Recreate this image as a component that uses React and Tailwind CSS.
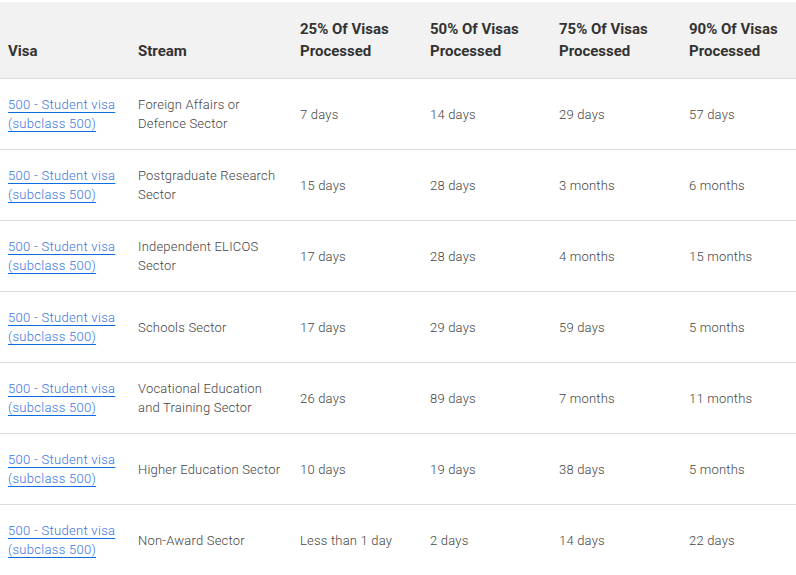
const rows = [
  ["Foreign Affairs or Defence Sector", "7 days", "14 days", "29 days", "57 days"],
  ["Postgraduate Research Sector", "15 days", "28 days", "3 months", "6 months"],
  ["Independent ELICOS Sector", "17 days", "28 days", "4 months", "15 months"],
  ["Schools Sector", "17 days", "29 days", "59 days", "5 months"],
  ["Vocational Education and Training Sector", "26 days", "89 days", "7 months", "11 months"],
  ["Higher Education Sector", "10 days", "19 days", "38 days", "5 months"],
  ["Non-Award Sector", "Less than 1 day", "2 days", "14 days", "22 days"],
];

const headers = [
  "Visa",
  "Stream",
  "25% Of Visas Processed",
  "50% Of Visas Processed",
  "75% Of Visas Processed",
  "90% Of Visas Processed",
];

export default function App() {
  return (
    <div className="w-[796px] h-[575px] overflow-hidden bg-white pt-[2px] font-['Roboto',sans-serif]">
      <table className="w-[796px] table-fixed border-collapse">
        <colgroup>
          <col className="w-[130px]" />
          <col className="w-[162px]" />
          <col className="w-[130px]" />
          <col className="w-[129px]" />
          <col className="w-[130px]" />
          <col className="w-[115px]" />
        </colgroup>
        <thead>
          <tr className="bg-[#f2f2f2] border-b border-[#dcdcdc]">
            {headers.map((h) => (
              <th
                key={h}
                className="pl-2 pr-3 pt-4 pb-4 text-left align-bottom text-[15px] leading-[22px] font-bold text-[#333]"
              >
                {h}
              </th>
            ))}
          </tr>
        </thead>
        <tbody>
          {rows.map((r, i) => (
            <tr key={i} className="border-b border-[#dcdcdc]">
              <td className="pl-2 pr-1 py-4 align-middle text-[13px] leading-[19px] font-light tracking-[0.3px]">
                <a
                  href="#"
                  className="text-[#3a74df] underline decoration-[#0a6ee0] underline-offset-[3px]"
                >
                  500 - Student visa (subclass 500)
                </a>
              </td>
              {r.map((c, j) => (
                <td
                  key={j}
                  className={
                    j === 0
                      ? "pl-2 pr-[10px] py-4 align-middle text-[13px] leading-[19px] font-light text-[#444] tracking-[0.2px]"
                      : "pl-2 pr-1 py-4 align-middle text-[13px] leading-[19px] font-light text-[#444] tracking-[0.2px]"
                  }
                >
                  {c}
                </td>
              ))}
            </tr>
          ))}
        </tbody>
      </table>
    </div>
  );
}
